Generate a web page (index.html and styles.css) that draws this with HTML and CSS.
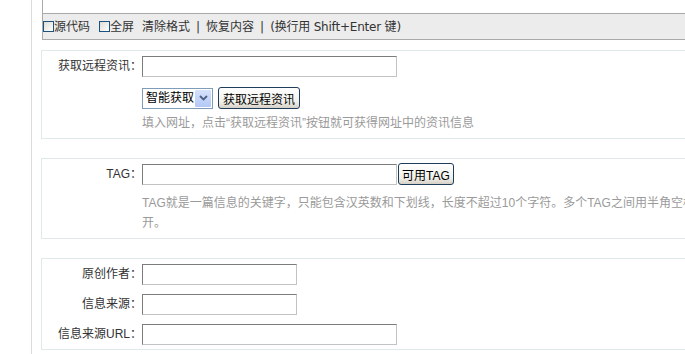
FILE: index.html
```html
<!DOCTYPE html>
<html lang="zh-CN">
  <head>
    <meta charset="UTF-8" />
    <title>发布信息</title>
    <link rel="stylesheet" href="styles.css">
  </head>
  <body>
    <div class="wrap">
      <div class="editor"></div>
      <div class="toolbar">
        <label class="tool"><span class="check"></span>源代码</label>
        <label class="tool tool-full"><span class="check"></span>全屏</label>
        <span class="action">清除格式</span>
        <span class="sep">|</span>
        <span class="action">恢复内容</span>
        <span class="sep">|</span>
        <span class="tip">(换行用 Shift+Enter 键)</span>
      </div>

      <div class="section">
        <div class="field-row">
          <span class="label">获取远程资讯：</span>
          <input type="text" class="input input-long" />
        </div>
        <div class="control-row">
          <span class="select">
            <span class="select-text">智能获取</span>
            <span class="select-arrow">
              <svg width="9" height="6" viewBox="0 0 9 6">
                <path d="M1 1 L4.5 4.5 L8 1" fill="none" stroke="#4d6185" stroke-width="1.8" />
              </svg>
            </span>
          </span>
          <button class="button">获取远程资讯</button>
        </div>
        <p class="hint">填入网址，点击“获取远程资讯”按钮就可获得网址中的资讯信息</p>
      </div>

      <div class="section section-gap">
        <div class="field-row">
          <span class="label">TAG：</span>
          <input type="text" class="input input-long" /><button class="button button-tag">可用TAG</button>
        </div>
        <p class="hint hint-tag">TAG就是一篇信息的关键字，只能包含汉英数和下划线，长度不超过10个字符。多个TAG之间用半角空格隔开。</p>
      </div>

      <div class="section section-gap section-last">
        <div class="field-row">
          <span class="label">原创作者：</span>
          <input type="text" class="input input-short" />
        </div>
        <div class="field-row">
          <span class="label">信息来源：</span>
          <input type="text" class="input input-short" />
        </div>
        <div class="field-row">
          <span class="label">信息来源URL：</span>
          <input type="text" class="input input-long" />
        </div>
      </div>
    </div>
  </body>
</html>
```

FILE: styles.css
```css
:root {
  --text-color: #333;
  --hint-color: #9a9a9a;
  --section-border: #dfe9e9;
  --tool-border: #aaaaaa;
}

* {
  margin: 0;
  padding: 0;
  box-sizing: border-box;
}

html {
  overflow: hidden;
}

body {
  font-family: "Liberation Sans", "Noto Sans CJK SC", sans-serif;
  font-size: 12px;
  color: var(--text-color);
  background: #fff;
}

.wrap {
  margin-left: 31px;
  width: 800px;
  min-height: 100vh;
  padding-left: 9px;
  border-left: 1px solid #dcdcdc;
}

.editor {
  height: 13px;
  margin-left: 1px;
  border-left: 1px solid var(--tool-border);
}

.toolbar {
  display: flex;
  align-items: center;
  height: 27px;
  margin-left: 1px;
  background: #ececec;
  border: 1px solid var(--tool-border);
  border-right: none;
  font-family: "DejaVu Sans", "Noto Sans CJK SC", sans-serif;
  font-size: 12px;
  line-height: 16px;
}

.tool {
  display: flex;
  align-items: center;
  margin-right: 9px;
}

.tool-full {
  margin-right: 8px;
}

.check {
  display: inline-block;
  width: 11px;
  height: 11px;
  margin-right: 0;
  border: 1px solid #1c5180;
  background: linear-gradient(135deg, #dcdcd7, #ffffff);
}

.sep {
  margin: 0 6px;
}

.tip {
  letter-spacing: -0.2px;
}

.section {
  margin-top: 10px;
  border: 1px solid var(--section-border);
  border-right: none;
}

.section-gap {
  margin-top: 19px;
}

.section-last {
  border-bottom: 1px solid var(--section-border);
}

.field-row {
  display: flex;
  align-items: center;
  height: 30px;
}

.label {
  width: 100px;
  text-align: right;
  line-height: 16px;
}

.input {
  height: 21px;
  border: 1px solid;
  border-color: #7c7c7c #c3c3c3 #c3c3c3 #7c7c7c;
  background: #fff;
  font-size: 12px;
}

.input-long {
  width: 255px;
}

.input-short {
  width: 155px;
}

.control-row {
  display: flex;
  align-items: center;
  gap: 5px;
  margin-left: 100px;
  padding-top: 6px;
}

.select {
  display: inline-flex;
  align-items: center;
  width: 71px;
  height: 21px;
  border: 1px solid #7f9db9;
  background: #fff;
  line-height: 16px;
}

.select-text {
  padding-left: 3px;
  color: #000;
}

.select-arrow {
  display: flex;
  align-items: center;
  justify-content: center;
  width: 16px;
  height: 17px;
  margin-left: auto;
  margin-right: 1px;
  border-radius: 1px;
  background: linear-gradient(#d6e2fd, #b4c8f6);
}

.button {
  height: 22px;
  padding: 0 4px;
  border: 1px solid #1f3c5a;
  border-radius: 3px;
  background: linear-gradient(#ffffff, #f0f0ea 70%, #d6d0c5);
  font-family: "Liberation Sans", "Noto Sans CJK SC", sans-serif;
  font-size: 12px;
  color: #000;
}

.button-tag {
  padding: 0 3px;
  margin-left: 1px;
}

.hint {
  margin-left: 100px;
  margin-top: 4px;
  padding-bottom: 5px;
  line-height: 20px;
  color: var(--hint-color);
}

.hint-tag {
  width: 574px;
}
```
